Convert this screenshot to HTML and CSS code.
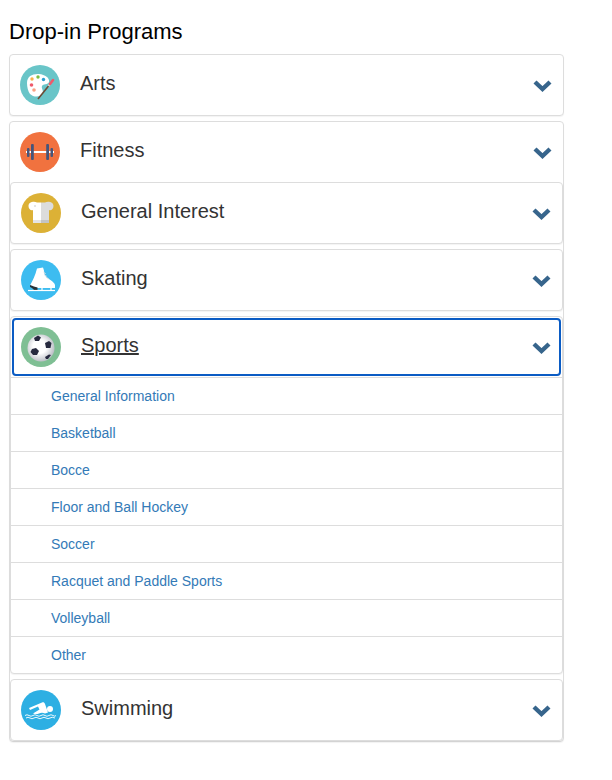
FILE: index.html
```html
<!doctype html>
<html lang="en">
  <head>
    <meta charset="UTF-8" />
    <meta name="viewport" content="width=device-width, initial-scale=1.0" />
    <title>Drop-in Programs</title>
    <link rel="stylesheet" href="styles.css">
  </head>
  <body>
    <svg class="defs" width="0" height="0" aria-hidden="true">
      <defs>
        <symbol id="chevron" viewBox="0 0 19 14">
          <polyline points="2,3 9.5,10 17,3" />
        </symbol>
        <radialGradient id="ballShade" cx="0.45" cy="0.45" r="0.62">
          <stop offset="0.4" stop-color="#ffffff" />
          <stop offset="1" stop-color="#aeb2bb" />
        </radialGradient>
      </defs>
    </svg>

    <div class="container">
      <h2 class="title">Drop-in Programs</h2>

      <div class="panel">
        <div class="heading">
          <a class="toggle" href="#">
            <svg class="icon" viewBox="0 0 40 40">
              <circle cx="20" cy="20" r="20" fill="#69c5c8" />
              <path d="M7 18C7 11 13 8.500 19 9C25 9.500 30 13 29 17C28 20 23 18.500 22 21C21 23.500 24 25 22.500 28.500C20.500 32.500 13.500 32.500 10 29C8 26.500 7 22 7 18Z" fill="#fff" />
              <circle cx="12" cy="14" r="1.7" fill="#f7b24a" />
              <circle cx="18" cy="12" r="1.7" fill="#7dbf3f" />
              <circle cx="23.500" cy="14.500" r="1.7" fill="#2b9fd0" />
              <circle cx="11.500" cy="20" r="1.8" fill="#ef5a6b" />
              <circle cx="14" cy="25" r="1.8" fill="#f9a183" />
              <line x1="18" y1="34" x2="28.500" y2="21" stroke="#6b4a35" stroke-width="1.600" />
              <line x1="28.500" y1="21" x2="29.500" y2="19.700" stroke="#d9d2c4" stroke-width="2" />
              <line x1="30" y1="19" x2="33" y2="15" stroke="#ef5a6b" stroke-width="2.600" stroke-linecap="round" />
            </svg>
            <span class="name">Arts</span>
            <svg class="chevron"><use href="#chevron" /></svg>
          </a>
        </div>
      </div>

      <div class="panel last">
        <div class="heading">
          <a class="toggle" href="#">
            <svg class="icon" viewBox="0 0 40 40">
              <circle cx="20" cy="20" r="20" fill="#f1723f" />
              <rect x="6" y="19" width="28" height="2" fill="#fff" />
              <g fill="#46557a">
                <rect x="7" y="16" width="2.500" height="9" rx="1" />
                <rect x="11" y="12" width="2.800" height="16" rx="1" />
                <rect x="26.200" y="12" width="2.800" height="16" rx="1" />
                <rect x="30.500" y="16" width="2.500" height="9" rx="1" />
              </g>
            </svg>
            <span class="name">Fitness</span>
            <svg class="chevron"><use href="#chevron" /></svg>
          </a>
        </div>

        <div class="nested">
          <div class="panel">
            <div class="heading">
              <a class="toggle" href="#">
                <svg class="icon" viewBox="0 0 40 40">
                  <circle cx="20" cy="20" r="20" fill="#dcb136" />
                  <path d="M20 9.500H16C13 8 7.500 9 7.500 13C7.500 16 10 18 12 17V30H20Z" fill="#fff" />
                  <path d="M20 9.500H24C27 8 32.500 9 32.500 13C32.500 16 30 18 28 17V30H20Z" fill="#dcdcdc" />
                  <rect x="12" y="27" width="8" height="3" fill="#e4e4e4" />
                  <rect x="20" y="27" width="8" height="3" fill="#c4c4c4" />
                  <circle cx="14" cy="13" r="1" fill="#dcdcdc" />
                </svg>
                <span class="name">General Interest</span>
                <svg class="chevron"><use href="#chevron" /></svg>
              </a>
            </div>
          </div>

          <div class="panel">
            <div class="heading">
              <a class="toggle" href="#">
                <svg class="icon" viewBox="0 0 40 40">
                  <circle cx="20" cy="20" r="20" fill="#3dbcf0" />
                  <path d="M16 8.500L22 7.500C23.500 11 23 14 24.500 16C27 19.500 33 21 34 25V28H17C14 28 12 27 9 25.500C11.500 21 14.500 15 16 8.500Z" fill="#fff" />
                  <path d="M22.500 12L25 14M23 14.500L26 16.500M25 17L28 19" stroke="#cfd8dc" stroke-width="0.800" />
                  <path d="M9 25C12 26 14 27 16.500 27.500V30H13C12 28.500 10.500 27.500 9 27Z" fill="#263238" />
                  <path d="M7 30.500H34" stroke="#fff" stroke-width="1.200" />
                  <path d="M21 28V30M30 28V30" stroke="#fff" stroke-width="1.200" />
                </svg>
                <span class="name">Skating</span>
                <svg class="chevron"><use href="#chevron" /></svg>
              </a>
            </div>
          </div>

          <div class="panel">
            <div class="heading">
              <a class="toggle focused" href="#">
                <svg class="icon" viewBox="0 0 40 40">
                  <circle cx="20" cy="20" r="20" fill="#7fbf94" />
                  <circle cx="20" cy="21" r="13.500" fill="url(#ballShade)" />
                  <g fill="#272a3f">
                    <path d="M13 11L17 8.500L20 10.500L18 14L14 14Z" />
                    <path d="M24 16L28 14L30.500 16L29.500 21L25 21Z" />
                    <path d="M11 22L15 21L18 24L16 28L12 28L9.500 25Z" />
                    <path d="M24 30L28 27.500L30 28L27 32L25 32Z" />
                  </g>
                </svg>
                <span class="name">Sports</span>
                <svg class="chevron"><use href="#chevron" /></svg>
              </a>
            </div>
            <ul class="links">
              <li><a href="#">General Information</a></li>
              <li><a href="#">Basketball</a></li>
              <li><a href="#">Bocce</a></li>
              <li><a href="#">Floor and Ball Hockey</a></li>
              <li><a href="#">Soccer</a></li>
              <li><a href="#">Racquet and Paddle Sports</a></li>
              <li><a href="#">Volleyball</a></li>
              <li><a href="#">Other</a></li>
            </ul>
          </div>

          <div class="panel">
            <div class="heading">
              <a class="toggle" href="#">
                <svg class="icon" viewBox="0 0 40 40">
                  <circle cx="20" cy="20" r="20" fill="#2dafe3" />
                  <circle cx="29" cy="19" r="3" fill="#fff" />
                  <path d="M8 18L21 12.500C22.500 12 23.500 12.500 24 14L27 22.500L24 23.500C22 22.500 20 22.500 18 23.500C16 24.500 14 24 12 23.500L18.500 19.500L17 16.500L9 20Z" fill="#fff" />
                  <path d="M4 25.500Q6 24 8 25.500T12 25.500T16 25.500T20 25.500T24 25.500T28 25.500T32 25.500T35 25.500" fill="none" stroke="#fff" stroke-width="0.900" />
                  <path d="M5 28Q7 26.500 9 28T13 28T17 28T21 28T25 28T29 28T34 28" fill="none" stroke="#fff" stroke-width="0.900" />
                </svg>
                <span class="name">Swimming</span>
                <svg class="chevron"><use href="#chevron" /></svg>
              </a>
            </div>
          </div>
        </div>
      </div>
    </div>
  </body>
</html>
```

FILE: styles.css
```css
body {
  margin: 0;
  padding: 0;
  background-color: #ffffff;
  font-family: "Liberation Sans", Arial, sans-serif;
  color: #333333;
}

.defs {
  position: absolute;
}

.container {
  width: 555px;
  margin-left: 9px;
  padding-bottom: 38px;
}

.title {
  margin: 20px 0 10px;
  font-size: 22px;
  font-weight: normal;
  line-height: 24px;
  color: #000000;
}

.panel {
  margin-bottom: 5px;
  background-color: #ffffff;
  border: 1px solid #dddddd;
  border-radius: 4px;
  box-shadow: 0 1px 1px rgba(0, 0, 0, 0.05);
}

.last {
  margin-bottom: 0;
}

.nested .panel:last-child {
  margin-bottom: 0;
}

.toggle {
  display: flex;
  align-items: center;
  height: 60px;
  padding: 0 11px 0 10px;
  box-sizing: border-box;
  color: #333333;
  font-size: 20px;
  text-decoration: none;
}

.focused {
  outline: 2px solid #0b5cc4;
  outline-offset: -3px;
  border-radius: 5px;
}

.focused .name {
  text-decoration: underline;
}

.icon {
  flex: none;
  width: 40px;
  height: 40px;
}

.name {
  flex: 1;
  margin-left: 20px;
  margin-bottom: 4px;
}

.chevron {
  flex: none;
  width: 19px;
  height: 14px;
  margin-top: 1px;
}

.chevron polyline,
symbol polyline {
  fill: none;
  stroke: #37658c;
  stroke-width: 4.4;
}

.links {
  margin: 0;
  padding: 0;
  list-style: none;
}

.links li {
  height: 36px;
  border-top: 1px solid #dddddd;
  padding-left: 40px;
  font-size: 14px;
  line-height: 36px;
}

.links a {
  color: #337ab7;
  text-decoration: none;
}
```
